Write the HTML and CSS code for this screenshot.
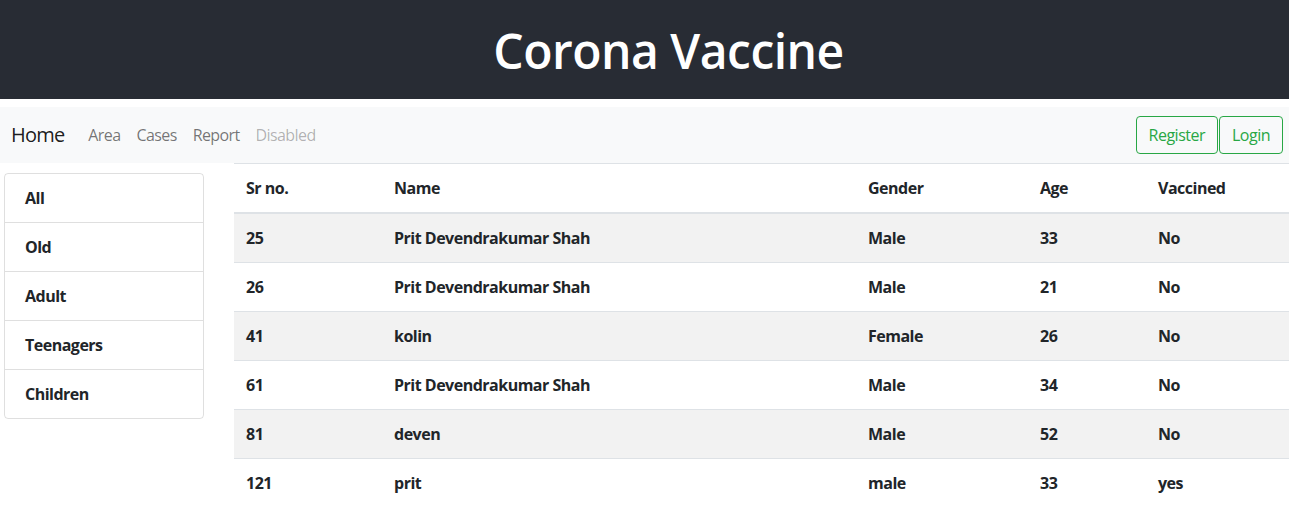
FILE: index.html
```html
<!DOCTYPE html>
<html lang="en">
<head>
<meta charset="utf-8">
<title>Corona Vaccine</title>
<link rel="stylesheet" href="styles.css">
</head>
<body>
<header class="app-header">
  <h1 class="app-title">Corona Vaccine</h1>
</header>
<nav class="navbar">
  <a class="brand" href="#">Home</a>
  <ul class="nav-links">
    <li><a class="nav-link" href="#">Area</a></li>
    <li><a class="nav-link" href="#">Cases</a></li>
    <li><a class="nav-link" href="#">Report</a></li>
    <li><a class="nav-link disabled" href="#">Disabled</a></li>
  </ul>
  <div class="nav-actions">
    <button class="btn-outline">Register</button>
    <button class="btn-outline">Login</button>
  </div>
</nav>
<main class="content">
  <aside class="sidebar">
    <ul class="list-group">
      <li class="list-item">All</li>
      <li class="list-item">Old</li>
      <li class="list-item">Adult</li>
      <li class="list-item">Teenagers</li>
      <li class="list-item">Children</li>
    </ul>
  </aside>
  <section class="table-wrap">
    <table class="data-table">
      <colgroup>
        <col class="c1"><col class="c2"><col class="c3"><col class="c4"><col class="c5">
      </colgroup>
      <thead>
        <tr><th>Sr no.</th><th>Name</th><th>Gender</th><th>Age</th><th>Vaccined</th></tr>
      </thead>
      <tbody>
        <tr><td>25</td><td>Prit Devendrakumar Shah</td><td>Male</td><td>33</td><td>No</td></tr>
        <tr><td>26</td><td>Prit Devendrakumar Shah</td><td>Male</td><td>21</td><td>No</td></tr>
        <tr><td>41</td><td>kolin</td><td>Female</td><td>26</td><td>No</td></tr>
        <tr><td>61</td><td>Prit Devendrakumar Shah</td><td>Male</td><td>34</td><td>No</td></tr>
        <tr><td>81</td><td>deven</td><td>Male</td><td>52</td><td>No</td></tr>
        <tr><td>121</td><td>prit</td><td>male</td><td>33</td><td>yes</td></tr>
      </tbody>
    </table>
  </section>
</main>
</body>
</html>
```
FILE: styles.css
```css
* { box-sizing: border-box; }
html, body { margin: 0; padding: 0; overflow: hidden; }
body {
  font-family: "Open Sans", "Noto Sans", "Liberation Sans", sans-serif;
  font-size: 16px;
  line-height: 24px;
  color: #212529;
  background: #fff;
}
.app-header {
  background: #282c34;
  height: 99px;
  padding: 27px 0 0 48px;
}
.app-title {
  margin: 0;
  color: #fff;
  font-size: 48px;
  font-weight: 600;
  line-height: 48px;
  letter-spacing: -0.5px;
  text-align: center;
}
.navbar {
  margin-top: 8px;
  height: 56px;
  background: #f8f9fa;
  display: flex;
  align-items: center;
  padding: 0 6px 0 11px;
}
.brand {
  font-size: 20px;
  color: rgba(0,0,0,.9);
  text-decoration: none;
  margin-right: 16px;
  letter-spacing: -0.8px;
}
.nav-links {
  list-style: none;
  margin: 0;
  padding: 0;
  display: flex;
}
.nav-link {
  display: block;
  padding: 8px 8px;
  color: rgba(0,0,0,.55);
  text-decoration: none;
  letter-spacing: -0.6px;
}
.nav-link.disabled { color: rgba(0,0,0,.3); }
.nav-actions {
  margin-left: auto;
  display: flex;
  gap: 1px;
}
.btn-outline {
  font: inherit;
  height: 38px;
  padding: 0 12px;
  background: transparent;
  color: #28a745;
  border: 1px solid #28a745;
  border-radius: 4px;
  letter-spacing: -0.5px;
}
.content {
  display: flex;
  align-items: flex-start;
}
.sidebar {
  width: 234px;
  flex: none;
  padding: 10px 30px 0 4px;
}
.list-group {
  list-style: none;
  margin: 0;
  padding: 0;
  border: 1px solid rgba(0,0,0,.125);
  border-radius: 4px;
}
.list-item {
  padding: 12px 20px;
  font-weight: 700;
  border-top: 1px solid rgba(0,0,0,.125);
  height: 49px;
  letter-spacing: -0.5px;
}
.list-item:first-child { border-top: 0; height: 48px; }
.table-wrap { flex: 1; }
.data-table {
  width: 100%;
  border-collapse: collapse;
  table-layout: fixed;
}
.c1 { width: 148px; }
.c2 { width: 474px; }
.c3 { width: 172px; }
.c4 { width: 118px; }
.c5 { width: 143px; }
.data-table th,
.data-table td {
  text-align: left;
  padding: 12px;
  font-weight: 700;
  border-top: 1px solid #dee2e6;
  white-space: nowrap;
  letter-spacing: -0.5px;
}
.data-table thead th { border-bottom: 2px solid #dee2e6; }
.data-table tbody tr:nth-child(odd) { background: #f2f2f2; }
```
